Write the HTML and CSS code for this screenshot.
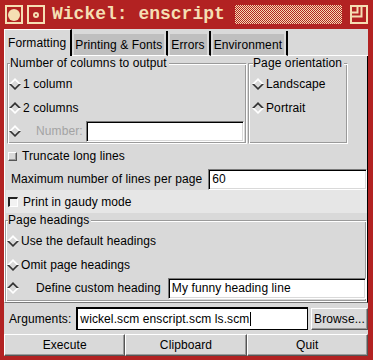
FILE: index.html
```html
<!DOCTYPE html>
<html>
<head>
<meta charset="utf-8">
<link rel="stylesheet" href="styles.css">
</head>
<body>
<div class="window">
  <div class="titlebar">
    <span class="tbtn"><span class="dot-big"></span></span>
    <span class="tbtn"><span class="dot-small"></span></span>
    <span class="title">Wickel: enscript</span>
    <span class="checker"></span>
    <span class="tbtn max"><svg width="14" height="15" viewBox="0 0 14 15"><path d="M9.5 0 V9.5 H0 M5.5 0 V5.5 H0" fill="none" stroke="#f5deb3" stroke-width="2"/></svg></span>
  </div>
  <div class="client">
    <div class="tabs">
      <div class="tab active">Formatting</div>
      <div class="tab"><span>Printing &amp; Fonts</span></div>
      <div class="tab"><span>Errors</span></div>
      <div class="tab"><span>Environment</span></div>
      <div class="tabfill"></div>
    </div>
    <div class="panel">
      <div class="groups">
        <fieldset class="group cols">
          <legend>Number of columns to output</legend>
          <div class="radio"><svg class="dia" viewBox="0 0 12 12"><path class="a" d="M0 6 L6 0 L12 6 L9.6 6 L6 2.4 L2.4 6Z"/><path class="b" d="M0 6 L6 12 L12 6 L9.8 6 L6 9.8 L2.2 6Z"/></svg><span>1 column</span></div>
          <div class="radio"><svg class="dia on" viewBox="0 0 12 12"><path class="a" d="M0 6 L6 0 L12 6 L9.6 6 L6 2.4 L2.4 6Z"/><path class="b" d="M0 6 L6 12 L12 6 L9.8 6 L6 9.8 L2.2 6Z"/></svg><span>2 columns</span></div>
          <div class="radio last"><svg class="dia" viewBox="0 0 12 12"><path class="a" d="M0 6 L6 0 L12 6 L9.6 6 L6 2.4 L2.4 6Z"/><path class="b" d="M0 6 L6 12 L12 6 L9.8 6 L6 9.8 L2.2 6Z"/></svg><span class="disabled">Number:</span><div class="entry num"></div></div>
        </fieldset>
        <fieldset class="group orient">
          <legend>Page orientation</legend>
          <div class="radio"><svg class="dia" viewBox="0 0 12 12"><path class="a" d="M0 6 L6 0 L12 6 L9.6 6 L6 2.4 L2.4 6Z"/><path class="b" d="M0 6 L6 12 L12 6 L9.8 6 L6 9.8 L2.2 6Z"/></svg><span>Landscape</span></div>
          <div class="radio"><svg class="dia on" viewBox="0 0 12 12"><path class="a" d="M0 6 L6 0 L12 6 L9.6 6 L6 2.4 L2.4 6Z"/><path class="b" d="M0 6 L6 12 L12 6 L9.8 6 L6 9.8 L2.2 6Z"/></svg><span>Portrait</span></div>
        </fieldset>
      </div>
      <div class="check"><span class="box raised"></span><span>Truncate long lines</span></div>
      <div class="field"><span class="flabel">Maximum number of lines per page</span><div class="entry maxl">60</div></div>
      <div class="check gaudy"><span class="box sunken"></span><span>Print in gaudy mode</span></div>
      <fieldset class="group heads">
        <legend>Page headings</legend>
        <div class="radio"><svg class="dia" viewBox="0 0 12 12"><path class="a" d="M0 6 L6 0 L12 6 L9.6 6 L6 2.4 L2.4 6Z"/><path class="b" d="M0 6 L6 12 L12 6 L9.8 6 L6 9.8 L2.2 6Z"/></svg><span>Use the default headings</span></div>
        <div class="radio"><svg class="dia" viewBox="0 0 12 12"><path class="a" d="M0 6 L6 0 L12 6 L9.6 6 L6 2.4 L2.4 6Z"/><path class="b" d="M0 6 L6 12 L12 6 L9.8 6 L6 9.8 L2.2 6Z"/></svg><span>Omit page headings</span></div>
        <div class="radio last"><svg class="dia on" viewBox="0 0 12 12"><path class="a" d="M0 6 L6 0 L12 6 L9.6 6 L6 2.4 L2.4 6Z"/><path class="b" d="M0 6 L6 12 L12 6 L9.8 6 L6 9.8 L2.2 6Z"/></svg><span class="custom">Define custom heading</span><div class="entry head">My funny heading line</div></div>
      </fieldset>
    </div>
    <div class="args">
      <span class="alabel">Arguments:</span>
      <div class="entry focus">wickel.scm enscript.scm ls.scm<span class="cursor"></span></div>
      <div class="btn browse">Browse...</div>
    </div>
    <div class="buttons">
      <div class="btn">Execute</div>
      <div class="btn">Clipboard</div>
      <div class="btn">Quit</div>
    </div>
  </div>
</div>
</body>
</html>
```
FILE: styles.css
```css
* { box-sizing: border-box; }
body {
  margin: 0;
  background: #b22222;
  font-family: "Liberation Sans", Arial, sans-serif;
  font-size: 12px;
  letter-spacing: 0.1px;
  color: #000;
}
.window {
  width: 373px;
  height: 360px;
  background: #b22222;
  padding: 0 5px 4px 4px;
  display: flex;
  flex-direction: column;
}
.titlebar {
  height: 29px;
  flex: none;
  display: flex;
  align-items: flex-start;
  padding-top: 5px;
  padding-left: 1px;
}
.tbtn {
  width: 18px;
  height: 19px;
  border: 2px solid #f5deb3;
  display: flex;
  align-items: center;
  justify-content: center;
  margin-right: 4px;
  flex: none;
}
.tbtn.max { margin-right: 0; align-items: flex-start; justify-content: flex-start; }
.dot-big { width: 12px; height: 12px; border-radius: 50%; background: #f5deb3; }
.dot-small { width: 6px; height: 6px; border-radius: 50%; border: 2px solid #f5deb3; }
.title {
  font-family: "Liberation Mono", "Courier New", monospace;
  font-weight: bold;
  font-size: 18px;
  line-height: 19px;
  letter-spacing: 0;
  color: #f5deb3;
  margin-left: 3px;
  white-space: nowrap;
}
.checker {
  flex: 1;
  height: 19px;
  margin: 0 8px 0 10px;
  background: repeating-conic-gradient(#f5deb3 0 25%, #b22222 0 50%) 0 0 / 2px 2px;
}
.client {
  flex: 1;
  background: #d9d9d9;
  display: flex;
  flex-direction: column;
}
.tabs {
  height: 27px;
  flex: none;
  display: flex;
  align-items: flex-end;
}
.tab {
  height: 25px;
  display: flex;
  align-items: center;
  border-right: 2px solid #000;
  border-bottom: 1px solid #fff;
  background: #d9d9d9;
  padding: 3px 2px 0 2px;
  white-space: nowrap;
}
.tab span {
  background: #bfbfbf;
  height: 100%;
  display: flex;
  align-items: center;
  padding: 0 2px 0 1px;
}
.tab.active {
  height: 27px;
  border-top: 1px solid #fff;
  border-left: 1px solid #fff;
  border-bottom: none;
  padding: 0 4px 0 3px;
}
.tabfill { flex: 1; border-bottom: 1px solid #fff; }
.panel {
  height: 247px;
  flex: none;
  border-left: 1px solid #fff;
  border-right: 1px solid #000;
  border-bottom: 1px solid #7a7a7a;
  display: flex;
  flex-direction: column;
}
.groups { display: flex; padding-left: 2px; height: 88px; }
.group {
  margin: 0;
  padding: 2px 0 0 1px;
  border: 1px solid;
  border-color: #9a9a9a #fff #fff #9a9a9a;
  box-shadow: inset 1px 1px #fff, inset -1px -1px #9a9a9a;
}
.group legend {
  padding: 0 2px 0 0;
  margin-left: 1px;
  line-height: 14px;
  background: #d9d9d9;
}
.cols { width: 240px; }
.orient { width: 100px; margin-left: 1px; padding-left: 3px; }
.heads { margin-left: 0; height: 89px; width: 362px; }
.radio {
  display: flex;
  align-items: center;
  height: 24px;
  gap: 2px;
}
.radio.last { height: 22px; }
.dia { width: 12px; height: 12px; flex: none; }
.dia .a { fill: #fff; }
.dia .b { fill: #333; }
.dia.on .a { fill: #333; }
.dia.on .b { fill: #fff; }
.disabled { color: #a3a3a3; margin-left: 13px; margin-right: 1px; }
.custom { margin-left: 15px; margin-right: 5px; }
.entry {
  background: #fff;
  height: 21px;
  border: 1px solid;
  border-color: #7a7a7a #fff #fff #7a7a7a;
  box-shadow: inset 1px 1px #000, inset -1px -1px #d9d9d9;
  display: flex;
  align-items: center;
  padding: 0 3px;
  white-space: nowrap;
}
.entry.num { width: 158px; }
.entry.head { flex: 1; }
.check {
  display: flex;
  align-items: center;
  height: 24px;
  gap: 5px;
  padding-left: 3px;
}
.check.gaudy { height: 23px; background: #e6e6e6; margin-left: 1px; padding-left: 2px; }
.box { width: 9px; height: 9px; flex: none; }
.box.raised {
  background: #d9d9d9;
  border: 1px solid;
  border-color: #fff #555 #555 #fff;
  box-shadow: inset -1px -1px #9a9a9a;
}
.box.sunken {
  width: 10px; height: 10px;
  background: #f2f2f2;
  border-top: 2px solid #222;
  border-left: 2px solid #222;
  border-right: 1px solid #fff;
  border-bottom: 1px solid #fff;
}
.field {
  display: flex;
  align-items: center;
  height: 22px;
  padding-left: 6px;
}
.flabel { margin-right: 6px; white-space: nowrap; }
.entry.maxl { flex: 1; }
.args {
  height: 31px;
  flex: none;
  display: flex;
  align-items: center;
  padding: 0 0 0 5px;
}
.alabel { margin-right: 5px; }
.entry.focus {
  flex: 1;
  height: 23px;
  border: 1px solid #000;
  box-shadow: inset 1px 1px #000, inset -1px -1px #fff;
  margin-right: 3px;
}
.cursor { display: inline-block; width: 1px; height: 14px; background: #000; margin-left: 1px; }
.btn {
  height: 22px;
  display: flex;
  align-items: center;
  justify-content: center;
  border: 1px solid;
  border-color: #fff #555 #555 #fff;
  box-shadow: inset -1px -1px #9a9a9a;
  background: #d9d9d9;
  white-space: nowrap;
}
.btn.browse { width: 57px; padding: 0 3px; }
.buttons {
  flex: 1;
  display: flex;
}
.buttons .btn { flex: 1; height: 100%; }
```
